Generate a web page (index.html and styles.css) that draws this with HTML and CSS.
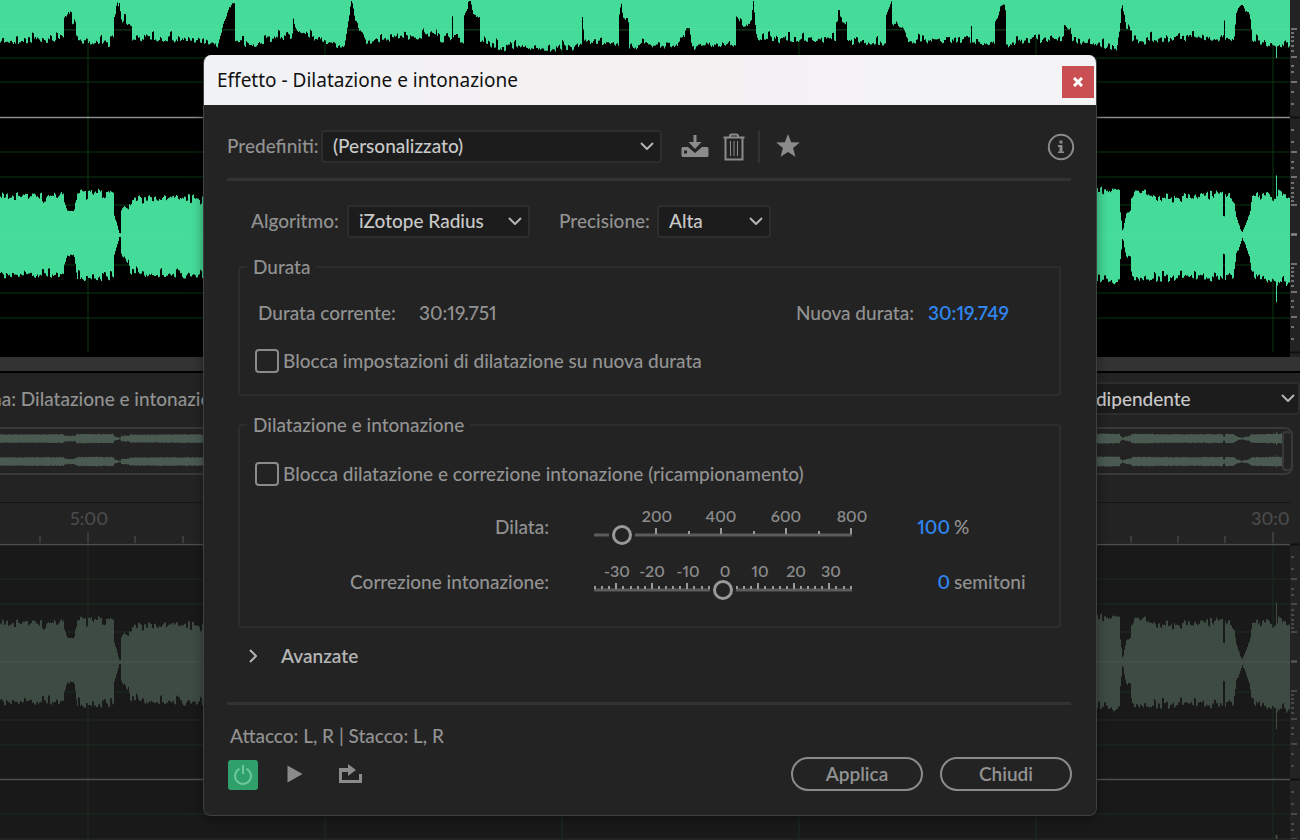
FILE: index.html
```
<!DOCTYPE html>
<html lang="it">
<head>
  <meta charset="UTF-8">
  <title>Effetto - Dilatazione e intonazione</title>
  <link rel="stylesheet" href="styles.css">
</head>
<body>

<div class="editor">
  <div class="track">
    <svg class="wave" id="waveMain" viewBox="0 0 1290 357" preserveAspectRatio="none"></svg>
    <svg class="db-scale" id="scaleMain" viewBox="0 0 10 357" preserveAspectRatio="none"></svg>
  </div>
  <div class="splitter"></div>

  <div class="preview">
    <div class="preview-bar">
      <span class="preview-title">ma: Dilatazione e intonazione</span>
      <div class="select view-select">
        <select aria-label="Visualizzazione"><option>Indipendente</option></select>
        <svg class="chevron" viewBox="0 0 14 8"><path d="M1 1l6 6 6-6"/></svg>
      </div>
    </div>
    <div class="overview">
      <svg id="overview" viewBox="0 0 1282 46" preserveAspectRatio="none"></svg>
      <span class="handle"></span>
    </div>
    <svg class="timeline" id="timeline" viewBox="0 0 1300 41"></svg>
    <div class="track track-dim">
      <svg class="wave" id="wavePreview" viewBox="0 116 1290 296" preserveAspectRatio="none"></svg>
      <svg class="db-scale" id="scalePreview" viewBox="0 116 10 296" preserveAspectRatio="none"></svg>
    </div>
  </div>
</div>

<div class="overlay">
<form class="dialog" onsubmit="return false">
  <div class="titlebar">
    <h1>Effetto - Dilatazione e intonazione</h1>
    <button type="button" class="close" aria-label="Chiudi finestra">
      <svg viewBox="0 0 10 10"><path d="M1 1l8 8M9 1l-8 8"/></svg>
    </button>
  </div>

  <div class="content">
    <div class="preset-row">
      <label for="preset">Predefiniti:</label>
      <div class="select preset-select">
        <select id="preset"><option>(Personalizzato)</option></select>
        <svg class="chevron" viewBox="0 0 14 8"><path d="M1 1l6 6 6-6"/></svg>
      </div>
      <button type="button" class="icon-btn save" aria-label="Salva predefinito">
        <svg width="28" height="24" viewBox="0 0 28 24">
          <path d="M12.500 0h3v7h5L14 14 7.500 7h5z"/>
          <path fill-rule="evenodd" d="M2 12h5l7 6 7-6h5q1.500 0 1.500 1.500v7q0 1.500-1.500 1.500H2Q.5 22 .5 20.500v-7Q.5 12 2 12zM3 15.500v3h3v-3z"/>
        </svg>
      </button>
      <button type="button" class="icon-btn" aria-label="Elimina predefinito">
        <svg width="22" height="28" viewBox="0 0 22 28">
          <path class="line" d="M.5 4.500h21M7 4V3q0-1.500 1.500-1.500h5Q15 1.500 15 3v1M2.500 5v21.500h17V5"/>
          <path class="line thin" d="M7.500 8v15M11 8v15M14.500 8v15"/>
        </svg>
      </button>
      <span class="separator"></span>
      <button type="button" class="icon-btn" aria-label="Preferito">
        <svg width="24" height="25" viewBox="0 0 24 25">
          <path d="M12 0l3.200 8.200 8.600.4-6.700 5.500 2.300 8.600-7.400-4.800-7.400 4.800 2.300-8.600L.2 8.600l8.600-.4z"/>
        </svg>
      </button>
      <button type="button" class="icon-btn info" aria-label="Informazioni">
        <svg width="28" height="28" viewBox="0 0 28 28">
          <circle cx="14" cy="14" r="12.200"/>
          <path d="M12.500 7.500h3v3h-3zM11 12h4.500v6.500H17V20h-6v-1.500h1.500V14H11z"/>
        </svg>
      </button>
    </div>

    <hr>

    <div class="algo-row">
      <label for="algo">Algoritmo:</label>
      <div class="select algo-select">
        <select id="algo"><option>iZotope Radius</option></select>
        <svg class="chevron" viewBox="0 0 14 8"><path d="M1 1l6 6 6-6"/></svg>
      </div>
      <label for="precision">Precisione:</label>
      <div class="select precision-select">
        <select id="precision"><option>Alta</option></select>
        <svg class="chevron" viewBox="0 0 14 8"><path d="M1 1l6 6 6-6"/></svg>
      </div>
    </div>

    <fieldset class="duration">
      <legend>Durata</legend>
      <div class="duration-row">
        <span class="current-label">Durata corrente:</span>
        <span>30:19.751</span>
        <label class="new-label" for="newDuration">Nuova durata:</label>
        <input type="text" class="value" id="newDuration" value="30:19.749">
      </div>
      <label class="check"><input type="checkbox">Blocca impostazioni di dilatazione su nuova durata</label>
    </fieldset>

    <fieldset class="stretch">
      <legend>Dilatazione e intonazione</legend>
      <label class="check"><input type="checkbox">Blocca dilatazione e correzione intonazione (ricampionamento)</label>
      <div class="slider-row">
        <label for="stretch">Dilata:</label>
        <div class="slider">
          <svg id="stretchScale" viewBox="0 0 258 38"></svg>
          <input type="range" id="stretch" min="10" max="800" value="96">
        </div>
        <input type="text" class="value" aria-label="Dilata, percentuale" value="100">
        <span class="unit">%</span>
      </div>
      <div class="slider-row">
        <label for="pitch">Correzione intonazione:</label>
        <div class="slider">
          <svg id="pitchScale" viewBox="0 0 258 38"></svg>
          <input type="range" id="pitch" min="-36" max="36" value="0">
        </div>
        <input type="text" class="value" aria-label="Correzione in semitoni" value="0">
        <span class="unit">semitoni</span>
      </div>
    </fieldset>

    <details>
      <summary>
        <svg viewBox="0 0 8 14"><path d="M1 1l6 6-6 6"/></svg>
        Avanzate
      </summary>
    </details>

    <hr>

    <p class="channels">Attacco: L, R | Stacco: L, R</p>
    <div class="footer">
      <button type="button" class="power" aria-label="Attiva effetto">
        <svg viewBox="0 0 20 20"><path d="M6.500 3.800a8 8 0 1 0 7 0M10 0v9"/></svg>
      </button>
      <button type="button" class="icon-btn play" aria-label="Riproduci">
        <svg width="16" height="18" viewBox="0 0 16 18"><path d="M.5.5l15 8.500-15 8.500z"/></svg>
      </button>
      <button type="button" class="icon-btn" aria-label="Ciclo">
        <svg width="25" height="20" viewBox="0 0 25 20">
          <path d="M1 4h9V0l8 6-8 6V8H4v8h17v-6h3v9H1z"/>
        </svg>
      </button>
      <button type="submit" class="pill apply">Applica</button>
      <button type="button" class="pill">Chiudi</button>
    </div>
  </div>
</form>
</div>

<script src="script.js"></script>
</body>
</html>
```
FILE: styles.css
```
* {
  box-sizing: border-box;
}
body {
  margin: 0;
  background-color: #232323;
  color: #929292;
  font-family: Lato, "Liberation Sans", sans-serif;
  font-size: 19px;
  font-weight: 500;
  font-variant-numeric: proportional-nums;
  line-height: 24px;
}
button, input, select {
  font: inherit;
  font-variant-numeric: inherit;
  color: inherit;
}
button {
  padding: 0;
  border: 0;
  background: none;
  cursor: pointer;
}
svg {
  display: block;
}

/* editor behind the dialog */
.editor {
  height: 100vh;
  min-height: 840px;
  overflow: hidden;
}
.track {
  display: flex;
  height: 357px;
  background-color: #000;
}
.track-dim {
  height: 296px;
  background-color: #191919;
}
.wave {
  flex: 1;
  min-width: 0;
  height: 100%;
}
.db-scale {
  width: 10px;
  height: 100%;
  background-color: #232323;
}
.splitter {
  height: 16px;
  background-color: #333;
  border-bottom: 2px solid #000;
}
.preview-bar {
  display: flex;
  justify-content: space-between;
  margin-top: 9px;
}
.preview-title {
  margin-left: -14px;
  padding-top: 5px;
}
.overview {
  display: flex;
  height: 48px;
  margin: 12px 7px 0 -10px;
  padding-left: 8px;
  border: 2px solid #393939;
  border-radius: 8px;
}
.overview svg {
  flex: 1;
  min-width: 0;
  height: 44px;
}
.handle {
  width: 9px;
  margin: 2px 0;
  border: 2px solid #393939;
  border-right: 0;
  border-radius: 4px;
}
.timeline {
  width: 100%;
  height: 41px;
  margin-top: 27px;
}
.timeline text {
  font-size: 18px;
  fill: #4c4c4c;
}

/* dialog */
.overlay {
  position: absolute;
  inset: 0;
  display: flex;
  justify-content: center;
  align-items: flex-start;
  padding-top: 55px;
}
.dialog {
  width: 894px;
  border: 1px solid #3d423f;
  border-top: 0;
  border-radius: 8px;
  background-color: #232323;
  box-shadow: 0 2px 12px rgba(0, 0, 0, 0.4);
  overflow: hidden;
}
.titlebar {
  display: flex;
  justify-content: space-between;
  align-items: center;
  height: 50px;
  padding: 4px 2px 0 13px;
  background: linear-gradient(90deg, #f0f2f6, #f5f1f3 40%, #f3f3f6);
}
.titlebar h1 {
  margin: 0 0 4px;
  color: #111;
  font-family: "Noto Sans", sans-serif;
  font-size: 19px;
  font-weight: 400;
}
.close {
  display: grid;
  place-items: center;
  width: 32px;
  height: 32px;
  background-color: #c94f52;
}
.close svg {
  width: 10px;
  height: 10px;
  stroke: #fff;
  stroke-width: 3;
}
.content {
  padding: 25px 25px 24px 23px;
}
hr {
  height: 3px;
  margin: 15px 0 24px;
  border: 0;
  background-color: #333;
}
.select {
  position: relative;
  height: 33px;
}
.select select {
  appearance: none;
  width: 100%;
  height: 33px;
  padding: 0 30px 2px 10px;
  border: 2px solid #2d2d2d;
  border-radius: 4px;
  background-color: #1c1c1c;
  color: #c8c8c8;
}
.chevron {
  position: absolute;
  top: 12px;
  right: 8px;
  width: 14px;
  height: 8px;
  fill: none;
  stroke: #b4b4b4;
  stroke-width: 2;
  pointer-events: none;
}
.view-select {
  width: 222px;
}
.select.view-select select {
  padding: 0 30px 0 0;
}
.view-select .chevron {
  right: 5px;
}
.preset-row, .algo-row, .duration-row, .footer {
  display: flex;
  align-items: center;
}
.preset-row label, .algo-row label {
  padding-bottom: 2px;
}
.preset-row label {
  width: 94px;
}
.preset-select {
  width: 341px;
  margin-right: 19px;
}
.icon-btn svg {
  fill: #8b8b8b;
}
.icon-btn .line {
  fill: none;
  stroke: #8b8b8b;
  stroke-width: 2;
}
.icon-btn .thin {
  stroke-width: 1;
}
.save {
  margin-right: 14px;
}
.separator {
  width: 2px;
  height: 32px;
  margin: 0 16px 0 13px;
  background-color: #333;
}
.info {
  margin-left: auto;
  margin-right: -4px;
}
.info circle {
  fill: none;
  stroke: #8b8b8b;
  stroke-width: 2;
}
.algo-row {
  padding-left: 24px;
}
.algo-row label {
  width: 96px;
}
.algo-select {
  width: 183px;
  margin-right: 29px;
}
.algo-row .algo-select + label {
  width: 98px;
}
.precision-select {
  width: 114px;
}
fieldset {
  min-width: 0;
  margin: 17px 10px 0 11px;
  padding: 22px 19px 21px 18px;
  border: 2px solid #2d2d2d;
  border-radius: 4px;
}
legend {
  margin-left: -11px;
  padding: 0 6px;
}
.current-label {
  width: 161px;
}
.new-label {
  margin-left: auto;
}
.value {
  padding: 0;
  border: 0;
  background: none;
  color: #2f86f0;
  font-weight: 600;
}
.duration-row {
  height: 24px;
  margin-bottom: 24px;
}
.duration-row .value {
  width: 112px;
  margin-left: 14px;
}
.check {
  display: flex;
  align-items: center;
  height: 24px;
  gap: 4px;
}
.check input {
  appearance: none;
  width: 24px;
  height: 24px;
  margin: 0 0 0 -3px;
  border: 2px solid #8b8b8b;
  border-radius: 4px;
}
.stretch {
  padding-top: 25px;
  padding-bottom: 25px;
}
.slider-row {
  display: grid;
  grid-template-columns: 291px 303px 98px 1fr;
  align-items: center;
  height: 38px;
  margin-top: 17px;
}
.check + .slider-row {
  margin-top: 22px;
}
.slider-row > label {
  text-align: right;
}
.slider-row .value {
  text-align: right;
}
.unit {
  padding-left: 4px;
}
.slider {
  position: relative;
  margin-left: 45px;
}
.slider svg {
  width: 258px;
  height: 38px;
  overflow: visible;
}
.slider text {
  fill: #8b8b8b;
  font-size: 16px;
  font-weight: 600;
  text-anchor: middle;
}
/* the track is part of the scale drawing, so only the thumb shows here */
.slider input {
  appearance: none;
  position: absolute;
  left: -10px;
  top: 17px;
  width: 278px;
  height: 20px;
  margin: 0;
  background: none;
}
.slider input::-webkit-slider-thumb {
  appearance: none;
  width: 20px;
  height: 20px;
  border: 3px solid #999;
  border-radius: 50%;
  background-color: #232323;
  box-shadow: 0 0 0 3px #232323;
}
details {
  margin: 16px 0 0 22px;
  color: #b4b4b4;
}
details + hr {
  margin: 34px 0 19px;
}
summary {
  display: flex;
  align-items: center;
  gap: 24px;
  list-style: none;
  font-weight: 600;
}
summary svg {
  width: 8px;
  height: 14px;
  fill: none;
  stroke: #b4b4b4;
  stroke-width: 2;
}
.channels {
  margin: 0 0 9px 3px;
}
.power {
  display: grid;
  place-items: center;
  width: 30px;
  height: 30px;
  margin: 2px 29px 0 1px;
  border-radius: 3px;
  background-color: #2fa06b;
}
.power svg {
  width: 20px;
  height: 20px;
  fill: none;
  stroke: #6cc79a;
  stroke-width: 2;
}
.play {
  margin-right: 35px;
}
.pill {
  width: 132px;
  height: 34px;
  border: 2px solid #8b8b8b;
  border-radius: 17px;
  font-weight: 600;
}
.apply {
  margin-left: auto;
  margin-right: 17px;
}
.footer {
  margin-right: -1px;
}
```
FILE: script.js
```
// lower edge of the first channel: x, y
const firstChannel = [
  [0,40],[63,41],[64,20],[67,15],[75,24],[76,42],[113,44],[114,18],[119,1],[121,20],[131,24],[132,38],
  [200,40],[217,46],[222,30],[231,4],[234,3],[235,42],[253,46],[265,40],[292,36],[293,22],[297,32],
  [330,44],[344,48],[348,20],[351,2],[356,22],[360,30],[365,42],[400,36],[415,37],[436,34],[437,40],
  [451,40],[452,20],[453,40],[463,41],[464,16],[470,3],[473,14],[479,18],[480,40],[500,48],[572,48],
  [581,43],[582,17],[584,43],[600,42],[618,46],[619,15],[621,6],[623,18],[628,20],[629,46],[683,44],
  [686,29],[690,32],[692,47],[735,43],[736,16],[742,24],[751,22],[753,1],[756,36],[757,39],[835,40],
  [836,20],[839,16],[846,24],[847,43],[885,43],[886,16],[891,1],[892,22],[901,28],[908,41],[970,40],
  [971,23],[972,40],[985,45],[994,42],[995,20],[1003,2],[1005,12],[1006,46],[1030,40],[1063,38],
  [1064,26],[1070,28],[1072,41],[1116,47],[1120,30],[1122,2],[1125,25],[1131,30],[1132,43],[1150,40],
  [1180,38],[1223,39],[1224,20],[1225,40],[1234,39],[1236,14],[1242,3],[1250,20],[1252,40],[1265,44],
  [1275,48],[1276,60],[1277,48],[1290,44]
];

// second channel: x, top, bottom
const secondChannel = [
  [0,196,275],[63,195,275],[64,203,262],[67,210,255],[74,211,257],[76,198,272],[77,192,278],[113,192,278],
  [114,215,256],[119,233,237],[120,233,237],[121,208,254],[128,208,262],[130,198,274],[203,197,276],
  [1096,189,280],[1119,190,282],[1120,212,258],[1122,230,240],[1123,228,242],[1126,215,256],[1130,209,258],
  [1131,196,274],[1135,190,280],[1160,196,279],[1190,196,277],[1222,194,279],[1223,217,254],[1224,217,254],
  [1225,195,279],[1233,196,277],[1236,218,256],[1242,232,238],[1249,215,257],[1251,196,274],[1275,193,283],
  [1276,173,301],[1277,193,283],[1290,196,284]
];

function noise(n) {
  const s = Math.sin(n * 127.1 + 311.7) * 43758.5453;
  return s - Math.floor(s);
}

function sample(points, x, col) {
  let i = 1;
  while (i < points.length - 1 && points[i][0] < x) i++;
  const a = points[i - 1];
  const b = points[i];
  return a[col] + (b[col] - a[col]) * (x - a[0]) / (b[0] - a[0]);
}

// rough peaks about two pixels wide, mostly small with a few longer ones
function jitter(n) {
  const h = Math.floor(n / 2);
  return (noise(h) - 0.5) * 6 + (noise(n) - 0.5) * 2 - (noise(h + 5000) > 0.85 ? 5 : 0);
}

function wavePath() {
  let first = "M0 0";
  let top = "";
  let bottom = "";
  for (let x = 0; x < 1290; x++) {
    const y1 = Math.max(1, sample(firstChannel, x, 1) + jitter(x));
    let t = sample(secondChannel, x, 1);
    let b = sample(secondChannel, x, 2);
    const k = Math.min(1, (b - t) / 80);
    t -= jitter(x + 2000) * k;
    b += jitter(x + 4000) * k;
    first += "V" + y1.toFixed(1) + "H" + (x + 1);
    top += (x ? "V" : "M0 ") + t.toFixed(1) + "H" + (x + 1);
    bottom = "V" + b.toFixed(1) + "H" + x + bottom;
  }
  return first + "V0Z" + top + bottom + "Z";
}

function drawTrack(id, wave, grid, zero, dim) {
  const lines = [30, 58, 82, 152, 177, 205, 265, 293, 318, 387, 412];
  let out = "";
  lines.forEach(y => { out += `<path d="M0 ${y}h1290" stroke="${grid}"/>`; });
  for (let x = 88; x < 1290; x += 237) {
    out += `<path d="M${x} 0V${dim ? 413 : 352}" stroke="${grid}"/>`;
  }
  out += `<path d="${wavePath()}" fill="${wave}"/>`;
  out += '<path d="M0 29.500H1290M0 235H1290" stroke="#fff" opacity=".05"/>';
  out += `<path d="M0 117.500H1290" stroke="${zero}" stroke-width="1.500"/>`;
  if (dim) {
    out += `<path d="M0 352.500H1290" stroke="${zero}" stroke-width="1.500"/>`;
    out += `<path d="M1276.500 408v4" stroke="${wave}" stroke-width="2"/>`;
  }
  document.getElementById(id).innerHTML = out;
}

function drawDbScale(id, color) {
  const small = [13, 25, 45, 51, 66, 71, 76, 80, 84];
  const big = [35, 60, 88, 118];
  let d = "";
  [117, 352].forEach(c => {
    [-1, 1].forEach(s => {
      small.forEach(v => { d += `M1 ${c + s * v}h3`; });
      big.forEach(v => { d += `M1 ${c + s * v}h6`; });
    });
  });
  document.getElementById(id).innerHTML =
    `<path d="${d}" stroke="${color}" stroke-width="1.500"/><path d="M0 117.500h10M0 352.500h10" stroke="#111" stroke-width="2"/>`;
}

function drawOverview() {
  let d = "";
  [10, 34].forEach(c => {
    for (let x = 0; x < 1282; x++) {
      const k = (sample(secondChannel, x, 2) - sample(secondChannel, x, 1)) / 80;
      const h = Math.max(0.8, k * 4 + noise(x + c) * 0.8);
      d += `M${x} ${c - h}h1v${2 * h}h-1z`;
    }
  });
  document.getElementById("overview").innerHTML = `<path d="${d}" fill="#4a5a51"/>`;
}

function drawTimeline() {
  let out = '<path d="M0 .5H1290.500V41" fill="none" stroke="#161616"/>';
  for (let i = 0; i < 27; i++) {
    const x = Math.round(40.300 + i * 47.400);
    out += `<path d="M${x} 41V${i % 5 === 1 ? 30 : 34}" stroke="#565656"/>`;
  }
  out += '<text x="89" y="23" text-anchor="middle">5:00</text>';
  out += '<text x="1251" y="23">30:00</text>';
  out += '<path d="M1290 1h10v40h-10z" fill="#232323"/>';
  document.getElementById("timeline").innerHTML = out;
}

function drawSliderScale(id, ticks, labels) {
  let d = "";
  ticks.forEach(t => { d += `M${t[0]} 26v-${t[1]}`; });
  let out = '<path d="M0 27H258" stroke="#5c5c5c" stroke-width="3"/>';
  out += `<path d="${d}" stroke="#999" stroke-width="2"/>`;
  labels.forEach(l => { out += `<text x="${l[0]}" y="14">${l[1]}</text>`; });
  document.getElementById(id).innerHTML = out;
}

drawTrack("waveMain", "#45db98", "#0b3a10", "#8c8c8c", false);
drawTrack("wavePreview", "#3e4b43", "#1c2e1f", "#4f4f4f", true);
drawDbScale("scaleMain", "#8c8c8c");
drawDbScale("scalePreview", "#555");
drawOverview();
drawTimeline();

const stretchTicks = [];
for (let i = 0; i < 7; i++) stretchTicks.push([62 + Math.round(i * 32.500), i % 2 ? 3 : 6]);
drawSliderScale("stretchScale", stretchTicks, [[63, 200], [127, 400], [192, 600], [258, 800]]);

const pitchTicks = [];
for (let v = -36; v <= 36; v += 2) pitchTicks.push([1 + Math.round((v + 36) * 3.550), v % 10 ? 3 : 6]);
drawSliderScale("pitchScale", pitchTicks,
  [[23, -30], [58, -20], [94, -10], [131, 0], [166, 10], [202, 20], [237, 30]]);
```
